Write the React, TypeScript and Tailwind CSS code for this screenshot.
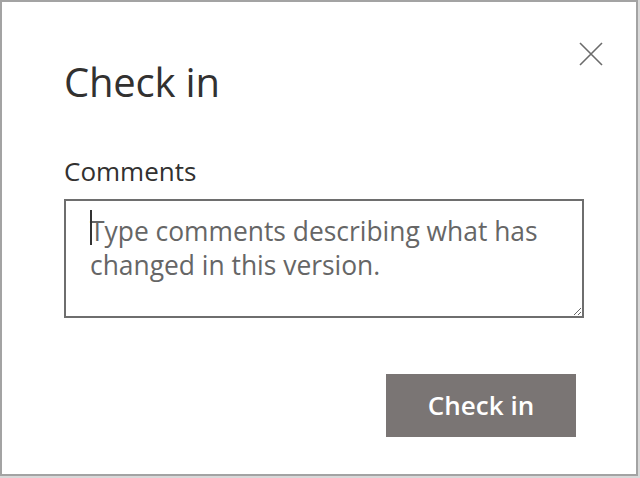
import React from "react";

export default function App() {
  return (
    <div className="w-[640px] h-[478px] bg-[#d9d9d9]" style={{ fontFamily: '"Open Sans", "Noto Sans", sans-serif' }}>
      <div className="w-[638px] h-[476px] border-2 border-[#a3a3a3] bg-white flex flex-col pl-[62px] pr-[52px]">
        <div className="flex items-start justify-between pt-[54px]">
          <h1 className="text-[40px] leading-[52px] text-[#323130] tracking-[-0.2px]">Check in</h1>
          <button type="button" aria-label="Close" className="-mr-[19px] -mt-[14px] w-[24px] h-[24px] text-[#6b6b6b]">
            <svg viewBox="0 0 24 24" width="24" height="24" fill="none" stroke="currentColor" strokeWidth="1.6">
              <path d="M1 1 L23 23 M23 1 L1 23" />
            </svg>
          </button>
        </div>
        <label className="mt-[46px] text-[26px] leading-[34px] text-[#323130]">Comments</label>
        <div className="relative mt-[11px]">
          <textarea
            className="block w-[520px] h-[119px] border-2 border-[#6e6e6e] px-[24px] pt-[13px] text-[26.4px] leading-[34px] text-[#323130] placeholder:text-[#666] outline-none resize-y"
            placeholder="Type comments describing what has changed in this version."
          />
          <span className="absolute left-[26px] top-[11px] w-[1.5px] h-[35px] bg-[#333]" />
        </div>
        <div className="flex justify-end mt-[56px] mr-[8px]">
          <button type="button" className="w-[190px] h-[63px] bg-[#7a7574] text-white text-[26px] font-semibold">
            Check in
          </button>
        </div>
      </div>
    </div>
  );
}
